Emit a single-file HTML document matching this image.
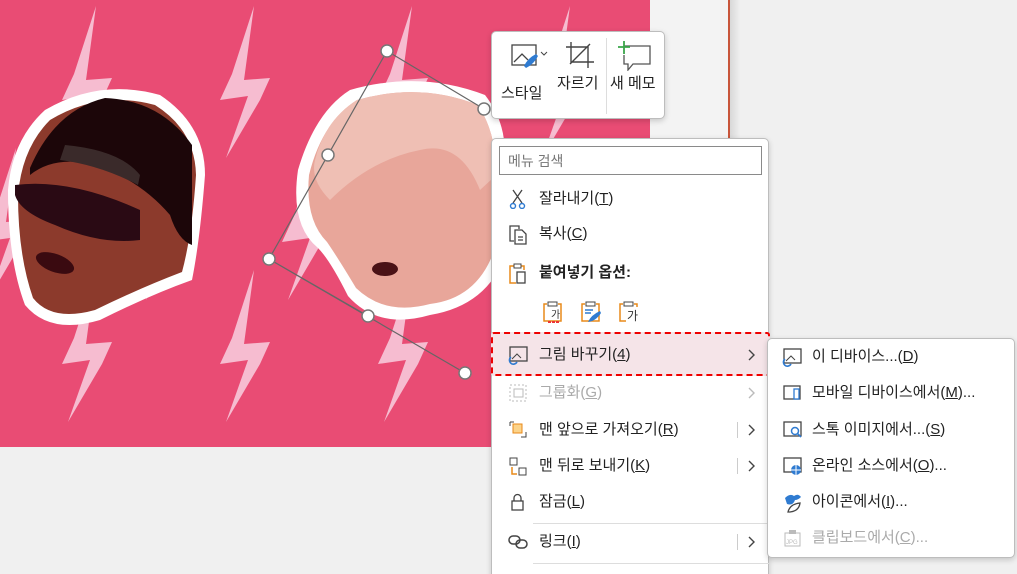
<!DOCTYPE html>
<html><head><meta charset="utf-8"><style>
*{margin:0;padding:0;box-sizing:border-box}
html,body{width:1017px;height:574px;overflow:hidden}
body{background:#f0f0f0;position:relative;font-family:"Liberation Sans","Noto Sans CJK KR",sans-serif;color:#222}
.abs{position:absolute}
.menu{background:#fff;border:1px solid #bdbdbd;border-radius:5px;box-shadow:0 2px 6px rgba(0,0,0,.18)}
.it{position:absolute;left:0;right:0;height:36px;font-size:15px;line-height:36px}
.it .t{position:absolute;left:47px}
.it svg{position:absolute;left:16px;top:8px}
.arr{position:absolute;left:254px;top:11px}
.vs{position:absolute;left:245px;top:10px;width:1px;height:16px;background:#ccc}
.dis{color:#aaa}
.sub .it .t{left:44px}
.sub .it svg{left:14px}
u{text-decoration:underline}
</style></head><body>
<svg class="abs" style="left:0;top:0" width="650" height="447" viewBox="0 0 650 447">
<defs>
<polygon id="b" points="96,6 74,74 62,100 90,96 68,158 102,100 112,78 86,80"/>
</defs>
<rect width="650" height="447" fill="#e94c74"/>
<g fill="#f6bcd0">
<use href="#b"/><use href="#b" x="158"/><use href="#b" x="316"/><use href="#b" x="474"/>
<use href="#b" x="-80" y="142"/><use href="#b" x="78" y="142"/><use href="#b" x="220" y="142"/><use href="#b" x="394" y="142"/><use href="#b" x="552" y="142"/>
<use href="#b" y="264"/><use href="#b" x="158" y="264"/><use href="#b" x="316" y="264"/><use href="#b" x="474" y="264"/>
</g>
<path d="M45,110 Q100,78 160,95 Q205,125 205,175 Q200,240 192,280 Q150,295 100,320 Q50,335 25,305 Q8,260 8,190 Q12,140 45,110Z" fill="#fff"/>
<path d="M50,120 Q100,90 155,105 Q195,130 196,175 Q192,235 182,272 Q140,288 95,310 Q52,322 33,298 Q18,255 18,195 Q22,148 50,120Z" fill="#8c3a2c"/>
<path d="M30,168 Q55,110 105,98 Q160,100 192,145 L192,245 Q178,240 170,215 Q140,180 95,165 Q55,155 30,175Z" fill="#1c0609"/>
<path d="M65,145 Q120,150 140,175 L138,185 Q100,165 60,160Z" fill="#3a2a2a"/>
<path d="M15,185 Q70,178 140,210 L140,240 Q100,245 55,225 Q20,212 15,195Z" fill="#2a0a14"/>
<ellipse cx="55" cy="263" rx="20" ry="9" fill="#3a0a10" transform="rotate(20 55 263)"/>
<path d="M350,90 Q420,70 485,95 Q512,130 502,175 L507,250 Q490,305 430,315 Q378,330 348,296 Q330,260 318,248 Q290,225 298,170 Q315,112 350,90Z" fill="#fff"/>
<path d="M357,100 Q420,82 478,105 Q500,140 493,178 L496,245 Q480,298 430,304 Q385,316 356,288 Q338,258 327,242 Q305,220 309,175 Q322,122 357,100Z" fill="#e8a69a"/>
<path d="M357,100 Q420,82 478,105 Q500,140 493,178 L480,190 Q460,140 420,150 Q370,160 330,200 Q310,180 315,160 Q325,120 357,100Z" fill="#efbfb4"/>
<ellipse cx="385" cy="269" rx="13" ry="7" fill="#4a1216"/>
<path d="M387,51 L484,109 M387,51 L269,259 L465,373 M269,259 L368,316" stroke="#666" stroke-width="1.2" fill="none"/>
<g fill="#fff" stroke="#777" stroke-width="1.5"><circle cx="387" cy="51" r="6"/><circle cx="484" cy="109" r="6"/><circle cx="328" cy="155" r="6"/><circle cx="269" cy="259" r="6"/><circle cx="368" cy="316" r="6"/><circle cx="465" cy="373" r="6"/></g>
</svg>
<div class="abs" style="left:650px;top:0;width:78px;height:574px;background:#f3f3f3"></div>
<div class="abs" style="left:728px;top:0;width:2px;height:574px;background:#c8553a"></div>
<div class="abs" style="left:730px;top:0;width:10px;height:574px;background:linear-gradient(90deg,#d8d8d8,#efefef)"></div>

<div class="abs menu" style="left:491px;top:31px;width:174px;height:88px">
<svg class="abs" style="left:18px;top:10px" width="40" height="30"><rect x="2" y="3" width="24" height="20" fill="none" stroke="#444" stroke-width="1.3"/><path d="M4,20 l8,-8 l6,6" fill="none" stroke="#444" stroke-width="1.3"/><path d="M14,24 q4,-8 12,-12 l2,2 q-4,8 -12,12z" fill="#2f7bd1"/><path d="M31,10 l3,3 l3,-3" fill="none" stroke="#444"/></svg>
<div class="abs" style="left:9px;top:50px;font-size:15px">스타일</div>
<svg class="abs" style="left:72px;top:8px" width="32" height="30"><path d="M7,2 V22 H30 M2,7 H24 V28 M6,24 L26,4" fill="none" stroke="#444" stroke-width="1.4"/></svg>
<div class="abs" style="left:65px;top:40px;font-size:15px">자르기</div>
<div class="abs" style="left:114px;top:6px;width:1px;height:76px;background:#ddd"></div>
<svg class="abs" style="left:125px;top:9px" width="34" height="30"><path d="M7,5 H33 V23 H16 L11,29 V23 H7 V14" fill="none" stroke="#555" stroke-width="1.3"/><path d="M7,0 V13 M1,6 H13" stroke="#3aa64a" stroke-width="1.8"/></svg>
<div class="abs" style="left:118px;top:40px;font-size:15px">새 메모</div>
</div>

<div class="abs menu" style="left:491px;top:138px;width:278px;height:445px">
<div class="abs" style="left:7px;top:7px;width:263px;height:29px;border:1px solid #8a8a8a;font-size:14px;color:#777;padding:4px 8px">메뉴 검색</div>
<div class="it" style="top:42px"><svg width="20" height="20"><path d="M5,1 L14,14 M14,1 L5,14" stroke="#444" stroke-width="1.3"/><circle cx="5" cy="17" r="2.5" fill="none" stroke="#2f7bd1" stroke-width="1.4"/><circle cx="14" cy="17" r="2.5" fill="none" stroke="#2f7bd1" stroke-width="1.4"/></svg><span class="t">잘라내기(<u>T</u>)</span></div>
<div class="it" style="top:77px"><svg width="20" height="22"><path d="M6,17 H2 V2 H11 V5" fill="none" stroke="#444" stroke-width="1.3"/><path d="M7,6 H14 L18,10 V20 H7Z M10,13 H15 M10,16 H15" fill="none" stroke="#444" stroke-width="1.3"/></svg><span class="t">복사(<u>C</u>)</span></div>
<div class="it" style="top:116px;font-weight:bold"><svg width="20" height="22"><path d="M6,3 H2 V20 H8 M13,3 H16 V7" fill="none" stroke="#e88a1a" stroke-width="1.5"/><rect x="6" y="1" width="7" height="4" fill="none" stroke="#444"/><rect x="9" y="9" width="8" height="11" fill="none" stroke="#444" stroke-width="1.3"/></svg><span class="t">붙여넣기 옵션:</span></div>
<div class="abs" style="left:50px;top:162px;font-size:11px">
<svg width="22" height="22" style="position:absolute;left:0"><path d="M5,3 H2 V20 H19 V3 H16" fill="none" stroke="#e88a1a" stroke-width="1.5"/><rect x="6" y="1" width="9" height="4" fill="none" stroke="#444"/><text x="9" y="17" font-size="10" fill="#333">가</text><path d="M6,21 H18" stroke="#e33" stroke-width="2" stroke-dasharray="3 1"/></svg>
<svg width="22" height="22" style="position:absolute;left:38px"><path d="M5,3 H2 V20 H19 V3 H16" fill="none" stroke="#e88a1a" stroke-width="1.5"/><rect x="6" y="1" width="9" height="4" fill="none" stroke="#444"/><path d="M5,9 H13 M5,12 H11" stroke="#2f7bd1" stroke-width="1.5"/><path d="M8,21 q3,-7 12,-11 l1,2 q-5,8 -13,9z" fill="#2f7bd1"/></svg>
<svg width="22" height="22" style="position:absolute;left:76px"><path d="M5,3 H2 V20 H8 M16,3 H19 V6" fill="none" stroke="#e88a1a" stroke-width="1.5"/><rect x="6" y="1" width="9" height="4" fill="none" stroke="#444"/><text x="9" y="19" font-size="12" fill="#333">가</text></svg>
</div>
<div class="abs" style="left:-1px;top:193px;width:279px;height:44px;background:#f5e4e8;border:2.5px dashed #e00;border-radius:3px"></div>
<svg style="display:none"><symbol id="ch" viewBox="0 0 8 12"><path d="M1,1 L6,6 L1,11" fill="none" stroke="currentColor" stroke-width="1.4"/></symbol></svg>
<div class="it" style="top:198px"><svg width="22" height="20"><rect x="2" y="2" width="17" height="14" fill="none" stroke="#444" stroke-width="1.3"/><path d="M4,14 l5,-5 l4,4" fill="none" stroke="#444"/><path d="M3,12 a4,4 0 1 0 6,5" fill="none" stroke="#2f7bd1" stroke-width="1.6"/></svg><span class="t">그림 바꾸기(<u>4</u>)</span><svg class="arr" style="left:256px;top:12px;color:#444" width="8" height="12"><use href="#ch"/></svg></div>
<div class="it dis" style="top:236px"><svg width="20" height="20"><rect x="2" y="2" width="16" height="16" fill="none" stroke="#bbb" stroke-dasharray="2 2"/><rect x="6" y="6" width="9" height="8" fill="none" stroke="#bbb"/></svg><span class="t">그룹화(<u>G</u>)</span><svg class="arr" style="left:256px;top:12px;color:#bbb" width="8" height="12"><use href="#ch"/></svg></div>
<div class="it" style="top:273px"><svg width="20" height="20"><rect x="5" y="4" width="9" height="9" fill="#fbd38a" stroke="#e88a1a"/><path d="M2,2 H6 M2,2 V6 M18,12 V17 H13" fill="none" stroke="#444"/></svg><span class="t">맨 앞으로 가져오기(<u>R</u>)</span><span class="vs"></span><svg class="arr" style="left:256px;top:12px;color:#444" width="8" height="12"><use href="#ch"/></svg></div>
<div class="it" style="top:309px"><svg width="20" height="22"><rect x="2" y="2" width="7" height="7" fill="none" stroke="#444"/><rect x="11" y="12" width="7" height="7" fill="none" stroke="#444"/><path d="M4,11 V18 H9" fill="none" stroke="#e88a1a" stroke-width="1.5"/></svg><span class="t">맨 뒤로 보내기(<u>K</u>)</span><span class="vs"></span><svg class="arr" style="left:256px;top:12px;color:#444" width="8" height="12"><use href="#ch"/></svg></div>
<div class="it" style="top:345px"><svg width="20" height="20"><rect x="4" y="9" width="11" height="9" fill="none" stroke="#444" stroke-width="1.3"/><path d="M6,9 V6 a3.5,3.5 0 0 1 7,0 V9" fill="none" stroke="#444" stroke-width="1.3"/></svg><span class="t">잠금(<u>L</u>)</span></div>
<div class="abs" style="left:41px;top:384px;width:236px;height:1px;background:#ddd"></div>
<div class="it" style="top:385px"><svg width="22" height="20"><rect x="1" y="4" width="11" height="8" rx="4" fill="none" stroke="#444" stroke-width="1.5"/><rect x="8" y="8" width="11" height="8" rx="4" fill="none" stroke="#444" stroke-width="1.5"/></svg><span class="t">링크(<u>I</u>)</span><span class="vs"></span><svg class="arr" style="left:256px;top:12px;color:#444" width="8" height="12"><use href="#ch"/></svg></div>
<div class="abs" style="left:41px;top:424px;width:236px;height:1px;background:#ddd"></div>
</div>

<div class="abs menu sub" style="left:767px;top:338px;width:248px;height:220px">
<div class="it" style="top:0px"><svg width="22" height="20"><rect x="2" y="2" width="17" height="14" fill="none" stroke="#444" stroke-width="1.3"/><path d="M4,14 l5,-5 l4,4" fill="none" stroke="#444"/><path d="M3,12 a4,4 0 1 0 6,5" fill="none" stroke="#2f7bd1" stroke-width="1.6"/></svg><span class="t">이 디바이스...(<u>D</u>)</span></div>
<div class="it" style="top:36px"><svg width="22" height="20"><rect x="2" y="3" width="16" height="13" fill="none" stroke="#444" stroke-width="1.3"/><rect x="12" y="6" width="5" height="10" fill="#fff" stroke="#2f7bd1" stroke-width="1.3"/></svg><span class="t">모바일 디바이스에서(<u>M</u>)...</span></div>
<div class="it" style="top:73px"><svg width="22" height="20"><rect x="2" y="2" width="17" height="14" fill="none" stroke="#444" stroke-width="1.3"/><circle cx="13" cy="11" r="3.5" fill="#fff" stroke="#2f7bd1" stroke-width="1.5"/><path d="M15.5,13.5 L19,17" stroke="#2f7bd1" stroke-width="1.6"/></svg><span class="t">스톡 이미지에서...(<u>S</u>)</span></div>
<div class="it" style="top:109px"><svg width="22" height="20"><rect x="2" y="2" width="17" height="14" fill="none" stroke="#444" stroke-width="1.3"/><circle cx="14" cy="14" r="5" fill="#2f7bd1"/><path d="M9,14 H19 M14,9 V19" stroke="#fff"/></svg><span class="t">온라인 소스에서(<u>O</u>)...</span></div>
<div class="it" style="top:145px"><svg width="22" height="22"><path d="M3,6 q5,-5 9,-2 q4,-3 7,1 q-3,3 -6,3 q-2,6 -8,4z" fill="#2f7bd1"/><path d="M6,20 q2,-8 12,-9 q-1,8 -10,9z" fill="none" stroke="#444" stroke-width="1.3"/></svg><span class="t">아이콘에서(<u>I</u>)...</span></div>
<div class="it dis" style="top:181px"><svg width="22" height="20"><rect x="3" y="5" width="15" height="13" fill="none" stroke="#bbb"/><rect x="7" y="2" width="7" height="4" fill="#bbb"/><text x="4" y="16" font-size="6" fill="#bbb">JPG</text></svg><span class="t">클립보드에서(<u>C</u>)...</span></div>
</div>
</body></html>
